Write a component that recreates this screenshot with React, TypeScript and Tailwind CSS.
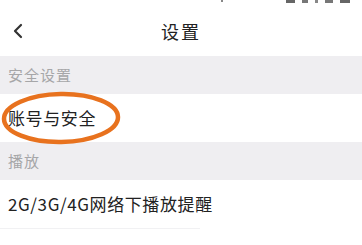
import React from 'react';

const font = { fontFamily: '"Noto Sans CJK SC", "Noto Sans", sans-serif' };

function SectionLabel({ children }: { children: React.ReactNode }) {
  return (
    <div className="h-[38px] bg-[#efeef1] flex items-center pl-2 text-[15px] text-[#a6a6a8] tracking-[1px]">
      {children}
    </div>
  );
}

function Row({ children }: { children: React.ReactNode }) {
  return (
    <div className="h-[48px] bg-white flex items-center pl-2 text-[17px] text-[#222222] tracking-[0.6px]">
      {children}
    </div>
  );
}

export default function App() {
  return (
    <div className="w-[362px] h-[245px] bg-white overflow-hidden relative" style={font}>
      {/* status bar leftovers */}
      <div className="h-[10px] flex items-start gap-[7px] pl-[221px]">
        <span className="w-[2px] h-[2px] bg-[#888]" />
        <span className="ml-[56px] w-[9px] h-[3px] bg-[#666]" />
        <span className="w-[6px] h-[3px] bg-[#777]" />
        <span className="w-[3px] h-[3px] bg-[#888]" />
        <span className="w-[8px] h-[3px] bg-[#777]" />
        <span className="w-[10px] h-[3px] bg-[#666]" />
      </div>

      {/* header */}
      <div className="h-[46px] flex items-center relative pb-[5px]">
        <svg className="ml-[12px]" width="12" height="16" viewBox="0 0 12 16" fill="none">
          <path d="M9 2 L3 8 L9 14" stroke="#333" strokeWidth="2.2" strokeLinecap="round" strokeLinejoin="round" />
        </svg>
        <div className="absolute left-0 right-0 top-[8px] text-center text-[18px] text-[#222] tracking-[2px] pointer-events-none">
          设置
        </div>
      </div>

      <SectionLabel>安全设置</SectionLabel>
      <Row>账号与安全</Row>
      <SectionLabel>播放</SectionLabel>
      <Row>2G/3G/4G网络下播放提醒</Row>
      <div className="h-px bg-[#f1f1f3] w-[200px]" />

      {/* hand-drawn highlight */}
      <svg className="absolute left-0 top-[88px]" width="130" height="62" viewBox="0 0 130 62" fill="none">
        <ellipse cx="61" cy="30" rx="57" ry="24" stroke="#e8721e" strokeWidth="4.5" transform="rotate(-1 61 30)" />
      </svg>
    </div>
  );
}
